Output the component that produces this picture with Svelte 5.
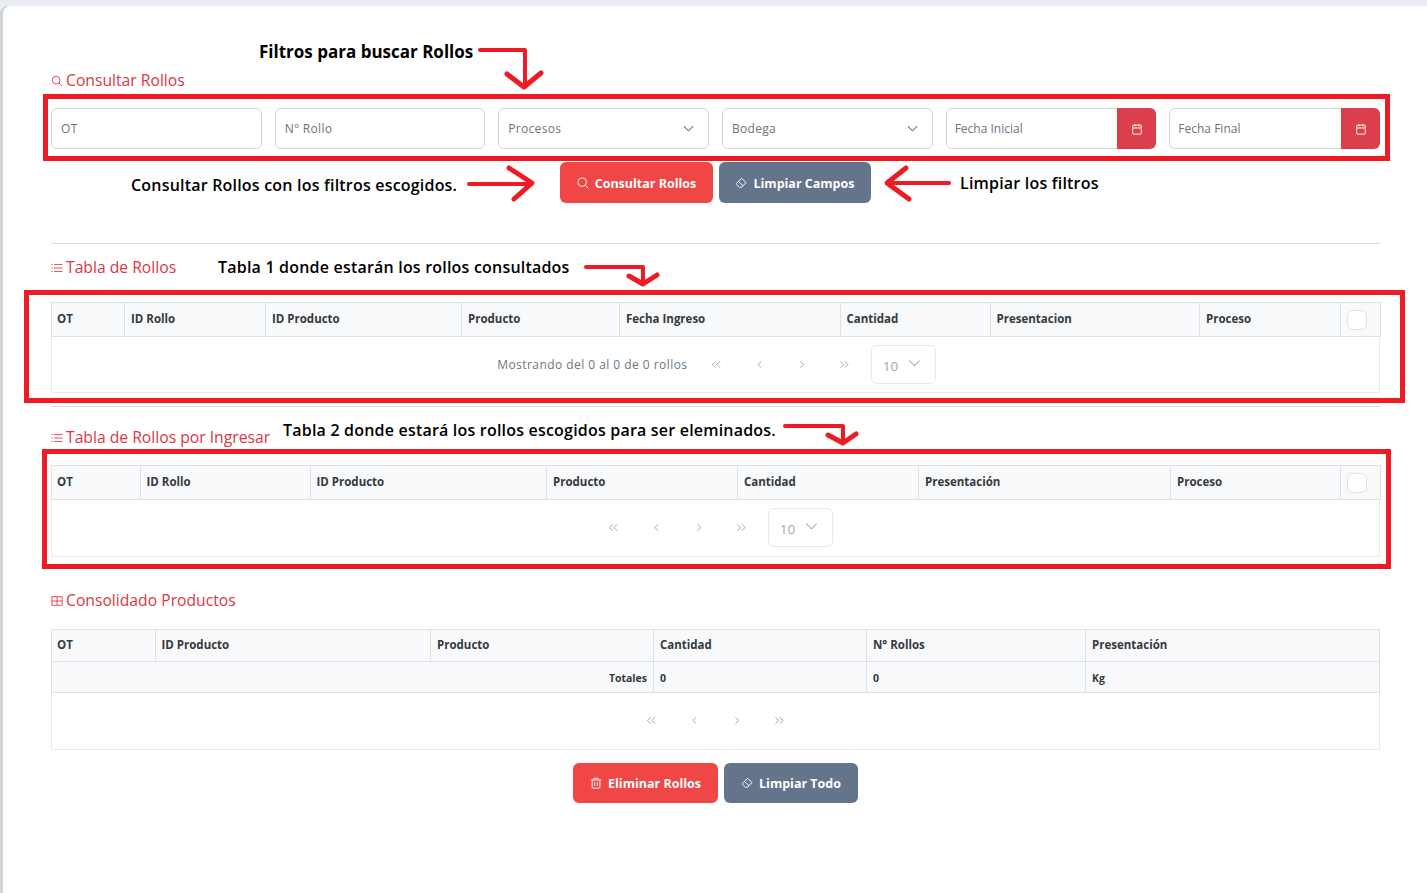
<script lang="ts">
	const filters = [
		{ label: 'OT', kind: 'text' },
		{ label: 'N° Rollo', kind: 'text' },
		{ label: 'Procesos', kind: 'select' },
		{ label: 'Bodega', kind: 'select' },
		{ label: 'Fecha Inicial', kind: 'date' },
		{ label: 'Fecha Final', kind: 'date' }
	];

	const rollos = [
		['OT', 73],
		['ID Rollo', 141],
		['ID Producto', 196],
		['Producto', 158],
		['Fecha Ingreso', 220.5],
		['Cantidad', 150],
		['Presentacion', 209.5],
		['Proceso', 141]
	] as [string, number][];

	const ingresar = [
		['OT', 88.5],
		['ID Rollo', 170],
		['ID Producto', 236.5],
		['Producto', 191],
		['Cantidad', 181],
		['Presentación', 252],
		['Proceso', 170]
	] as [string, number][];

	const consolidado = [
		['OT', 103.5],
		['ID Producto', 275.5],
		['Producto', 223],
		['Cantidad', 213],
		['N° Rollos', 219],
		['Presentación', 294]
	] as [string, number][];

	const notes = [
		{ text: 'Filtros para buscar Rollos', x: 259, y: 41, strong: true },
		{ text: 'Consultar Rollos con los filtros escogidos.', x: 131, y: 174, strong: false },
		{ text: 'Limpiar los filtros', x: 960, y: 172, strong: false },
		{ text: 'Tabla 1 donde estarán los rollos consultados', x: 218, y: 256, strong: false },
		{ text: 'Tabla 2 donde estará los rollos escogidos para ser eleminados.', x: 283, y: 419, strong: false }
	];
</script>

{#snippet title(icon: string, text: string)}
	<h2 class="title">
		<svg class="title-icon" viewBox="0 0 14 14" fill="none" stroke="currentColor" stroke-width="1">
			{#if icon === 'search'}
				<circle cx="6" cy="6" r="4.5" />
				<path d="M9.4 9.4 13 13" />
			{:else if icon === 'list'}
				<path d="M3.5 3h10M3.5 7h10M3.500 11h10M.5 3h1.500M.5 7h1.500M.5 11h1.500" />
			{:else}
				<path d="M1 2h12v10H1zM1 7h12M7 2v10" />
			{/if}
		</svg>
		{text}
	</h2>
{/snippet}

{#snippet eraser()}
	<svg class="btn-icon" viewBox="0 0 14 14" fill="none" stroke="currentColor" stroke-width="1.1">
		<path d="M7.6 1.500 12.900 6.400 7.800 12H5.200L1.900 8.800a1 1 0 0 1 0-1.400zM4 5.200l5.300 4.900" />
	</svg>
{/snippet}

{#snippet search()}
	<svg class="btn-icon" viewBox="0 0 14 14" fill="none" stroke="currentColor" stroke-width="1.1">
		<circle cx="6" cy="6" r="4.8" />
		<path d="M9.500 9.500 13.300 13.300" />
	</svg>
{/snippet}

{#snippet pager()}
	<div class="pager-links">
		<svg viewBox="0 0 14 14"><path d="M6.500 3 2 7l4.500 4M12 3 7.500 7l4.500 4" /></svg>
		<svg viewBox="0 0 14 14"><path d="M9.500 3 5 7l4.500 4" /></svg>
		<svg viewBox="0 0 14 14"><path d="M4.500 3 9 7l-4.500 4" /></svg>
		<svg viewBox="0 0 14 14"><path d="M2 3l4.500 4L2 11M7.500 3 12 7l-4.500 4" /></svg>
	</div>
{/snippet}

{#snippet rows()}
	<div class="rows">
		<span>10</span>
		<svg viewBox="0 0 14 14"><path d="M1.500 4 7 9.500 12.500 4" /></svg>
	</div>
{/snippet}

{#snippet head(columns: [string, number][], check: boolean)}
	<colgroup>
		{#each columns as column}
			<col style:width="{column[1]}px" />
		{/each}
		{#if check}<col style:width="39.5px" />{/if}
	</colgroup>
	<thead>
		<tr>
			{#each columns as column}
				<th>{column[0]}</th>
			{/each}
			{#if check}
				<th class="check-cell"><span class="check"></span></th>
			{/if}
		</tr>
	</thead>
{/snippet}

<div class="card">
	{@render title('search', 'Consultar Rollos')}

	<div class="filters">
		{#each filters as filter}
			<div class="field" class:date={filter.kind === 'date'}>
				<span class="field-text">{filter.label}</span>
				{#if filter.kind === 'select'}
					<svg class="chevron" viewBox="0 0 14 14"><path d="M2 4.500 7 9.500l5-5" /></svg>
				{/if}
				{#if filter.kind === 'date'}
					<span class="calendar">
						<svg viewBox="0 0 14 14" fill="none" stroke="currentColor" stroke-width="1.100">
							<path d="M3 2.500h8a1 1 0 0 1 1 1v8.500a1 1 0 0 1-1 1H3a1 1 0 0 1-1-1V3.500a1 1 0 0 1 1-1zM2 5.800h10M4.700 1v3M9.300 1v3" />
						</svg>
					</span>
				{/if}
			</div>
		{/each}
	</div>

	<div class="actions first">
		<button class="btn red wide1">{@render search()}Consultar Rollos</button>
		<button class="btn slate wide2">{@render eraser()}Limpiar Campos</button>
	</div>

	<hr class="rule-one" />

	{@render title('list', 'Tabla de Rollos')}
	<div class="table-wrap one">
		<table>
			{@render head(rollos, true)}
		</table>
		<div class="foot">
			<span class="report">Mostrando del 0 al 0 de 0 rollos</span>
			{@render pager()}
			{@render rows()}
		</div>
	</div>

	<hr class="rule-two" />

	{@render title('list', 'Tabla de Rollos por Ingresar')}
	<div class="table-wrap two">
		<table>
			{@render head(ingresar, true)}
		</table>
		<div class="foot">
			{@render pager()}
			{@render rows()}
		</div>
	</div>

	<div class="third-title">{@render title('grid', 'Consolidado Productos')}</div>
	<div class="table-wrap three">
		<table>
			{@render head(consolidado, false)}
			<tfoot>
				<tr>
					<td class="totals" colspan="3">Totales</td>
					<td>0</td>
					<td>0</td>
					<td>Kg</td>
				</tr>
			</tfoot>
		</table>
		<div class="foot bare">
			{@render pager()}
		</div>
	</div>

	<div class="actions last">
		<button class="btn red wide3">
			<svg class="btn-icon" viewBox="0 0 14 14" fill="none" stroke="currentColor" stroke-width="1.100">
				<path d="M1 3.500h12M4.500 3.500V1.500h5v2M2.500 3.500v8.500a1 1 0 0 0 1 1h7a1 1 0 0 0 1-1V3.500M5.500 6v4.500M8.500 6v4.500" />
			</svg>
			Eliminar Rollos
		</button>
		<button class="btn slate wide4">{@render eraser()}Limpiar Todo</button>
	</div>
</div>

<!-- anotaciones dibujadas encima de la captura -->
<svg class="marks" viewBox="0 0 1427 893" fill="none" stroke="#ed1c24" stroke-linecap="round" stroke-linejoin="round">
	<g stroke-linecap="butt" stroke-linejoin="miter" stroke-width="5">
		<rect x="45.500" y="96.500" width="1342" height="62" />
		<rect x="26.500" y="292.500" width="1376" height="108" />
		<rect x="44.500" y="451.500" width="1344" height="115" />
	</g>
	<g stroke-width="4">
		<path d="M480 50h45v34" />
		<path d="M469 184h62" />
		<path d="M949 183H888" />
		<path d="M586 267h57v15" />
		<path d="M785 426h58v15" />
	</g>
	<g stroke-width="5">
		<path d="M507 74l17 13 17-14" />
		<path d="M509 168l23 15-18 16" />
		<path d="M906 168l-19 15 22 16" />
		<path d="M629 276l14 8 14-9" />
		<path d="M828 435l15 8 13-9" />
	</g>
</svg>

<div class="notes">
	{#each notes as note}
		<span class="note" class:strong={note.strong} style:left="{note.x}px" style:top="{note.y}px">{note.text}</span>
	{/each}
</div>

<style>
	:global(body) {
		background: #e9ecf0;
		font-family: 'Open Sans', 'Noto Sans', sans-serif;
	}

	.card {
		box-sizing: border-box;
		height: 887px;
		margin: 6px 0 0 3px;
		padding: 62px 47px 0 48px;
		background: #fff;
		border-radius: 8px 0 0 0;
		box-shadow: -3px 0 0 #cfd3da;
		overflow: hidden;
	}

	.title {
		display: flex;
		align-items: center;
		gap: 3px;
		height: 24px;
		margin: 0;
		color: #dc3545;
		font-size: 15.700px;
		font-weight: 400;
	}

	.title-icon {
		width: 12px;
		height: 12px;
		flex: none;
		margin-top: 2px;
	}

	.filters {
		display: grid;
		grid-template-columns: repeat(6, 1fr);
		gap: 13px;
		margin-top: 16px;
	}

	.field {
		display: flex;
		align-items: center;
		box-sizing: border-box;
		height: 41px;
		padding-left: 9px;
		border: 1px solid #ced4da;
		border-radius: 6px;
		background: #fff;
	}

	.field-text {
		flex: 1;
		color: #6c757d;
		font-size: 12px;
		letter-spacing: 0.3px;
	}

	.date {
		padding-left: 8px;
	}

	.date .field-text {
		letter-spacing: 0;
	}

	.chevron {
		width: 13px;
		height: 13px;
		margin-right: 13px;
		fill: none;
		stroke: #6c757d;
		stroke-width: 1.100;
	}

	.calendar {
		display: flex;
		align-items: center;
		justify-content: center;
		width: 39px;
		height: 41px;
		margin: -1px -1px -1px 0;
		border-radius: 0 6px 6px 0;
		background: #dc3f4c;
		color: #fff;
	}

	.calendar svg {
		width: 12px;
		height: 12px;
	}

	.actions {
		display: flex;
		justify-content: center;
		gap: 6px;
	}

	.actions.first {
		margin-top: 13px;
	}

	.actions.last {
		margin-top: 13px;
	}

	.btn {
		display: flex;
		align-items: center;
		justify-content: center;
		gap: 6px;
		height: 41px;
		padding: 0;
		border: 0;
		border-radius: 6px;
		color: #fff;
		font-family: inherit;
		font-size: 12.500px;
		font-weight: 700;
	}

	.first .btn {
		padding-top: 1px;
	}

	.last .btn {
		height: 40px;
	}

	.red {
		background: #f14646;
	}

	.slate {
		background: #64748b;
	}

	.wide1 {
		width: 153px;
	}

	.wide2 {
		width: 152px;
	}

	.wide3 {
		width: 145px;
	}

	.wide4 {
		width: 134px;
	}

	.btn-icon {
		width: 12px;
		height: 12px;
		flex: none;
	}

	hr {
		height: 1px;
		margin: 0;
		border: 0;
		background: #d9d9dc;
	}

	.rule-one {
		margin: 40px 0 11px;
	}

	.rule-two {
		margin: 13px 0 18px;
	}

	.table-wrap.one {
		margin-top: 23px;
	}

	.table-wrap.two {
		margin-top: 16px;
	}

	.table-wrap.three {
		margin-top: 17px;
	}

	.third-title {
		margin-top: 31px;
	}

	table {
		width: 100%;
		border-collapse: collapse;
		table-layout: fixed;
		background: #f8f9fa;
	}

	th,
	td {
		box-sizing: border-box;
		height: 34px;
		padding: 0 6px 3px;
		border: 1px solid #dee2e6;
		color: #343a40;
		font-size: 11.500px;
		font-weight: 700;
		text-align: left;
	}

	th:first-child,
	td:first-child {
		padding-left: 5px;
	}

	.three th {
		height: 32px;
	}

	td {
		height: 31px;
		padding-top: 2px;
		padding-bottom: 0;
		font-size: 10.500px;
	}

	.totals {
		text-align: right;
	}

	.check-cell {
		padding: 0 0 0 6px;
	}

	.check {
		display: block;
		box-sizing: border-box;
		width: 20px;
		height: 20px;
		border: 1px solid #dee2e6;
		border-radius: 6px;
		background: #fff;
	}

	.foot {
		display: flex;
		align-items: center;
		justify-content: center;
		box-sizing: border-box;
		height: 56px;
		border: 1px solid #e9ecef;
		border-top: 0;
		background: #fff;
	}

	.one .foot {
		padding-left: 2px;
	}

	.two .foot {
		height: 57px;
		padding-right: 6px;
		padding-bottom: 1px;
	}

	.foot.bare {
		height: 57px;
		padding-bottom: 2px;
	}

	.report {
		margin-right: 8px;
		color: #6c757d;
		font-size: 12px;
		letter-spacing: 0.45px;
	}

	.pager-links {
		display: flex;
		gap: 0;
	}

	.pager-links svg {
		width: 11px;
		height: 11px;
		padding: 0 15.800px;
		fill: none;
		stroke: #a3a7ab;
		stroke-width: 1.200;
	}

	.rows {
		display: flex;
		align-items: center;
		box-sizing: border-box;
		width: 65px;
		height: 39px;
		margin-left: 5px;
		padding: 2px 14px 0 11px;
		border: 1px solid #e6e8ea;
		border-radius: 6px;
		color: #a5a9ae;
		font-size: 13.500px;
	}

	.rows span {
		flex: 1;
	}

	.rows svg {
		width: 13px;
		height: 13px;
		margin-top: -5px;
		fill: none;
		stroke: #a5a9ae;
		stroke-width: 1.100;
	}

	.marks {
		position: absolute;
		top: 0;
		left: 0;
		width: 1427px;
		height: 893px;
		pointer-events: none;
	}

	.notes {
		position: absolute;
		top: 0;
		left: 0;
	}

	.note {
		position: absolute;
		color: #000;
		font-size: 16px;
		font-weight: 600;
		letter-spacing: 0.2px;
		line-height: 22px;
		white-space: nowrap;
	}

	.note.strong {
		font-size: 17px;
		font-weight: 700;
		letter-spacing: 0;
	}
</style>
